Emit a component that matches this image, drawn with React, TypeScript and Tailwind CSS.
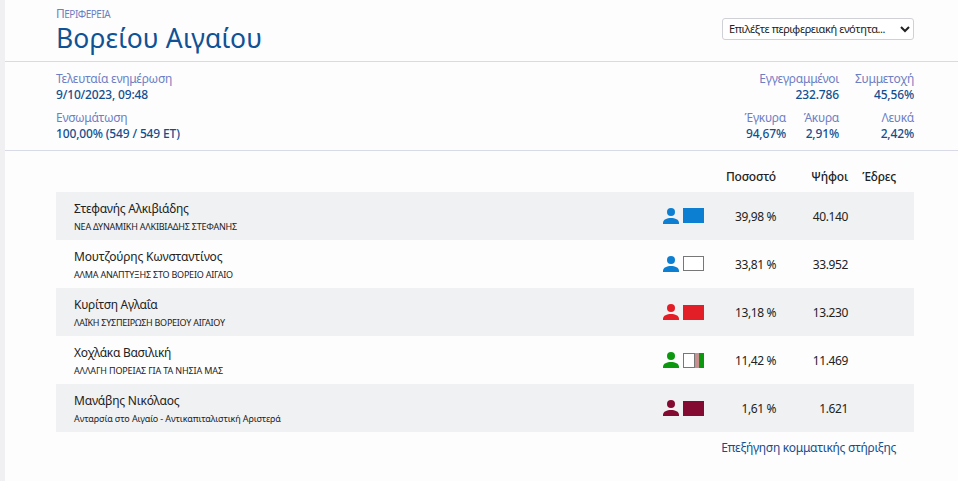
import React from "react";

type Candidate = {
    name: string;
    list: string;
    percent: string;
    votes: string;
    iconClass: string;
    flags: string[];
    flagOffset: string;
    nameClass: string;
    listClass: string;
};

const candidates: Candidate[] = [
    {
        name: "Στεφανής Αλκιβιάδης",
        list: "ΝΕΑ ΔΥΝΑΜΙΚΗ ΑΛΚΙΒΙΑΔΗΣ ΣΤΕΦΑΝΗΣ",
        percent: "39,98 %",
        votes: "40.140",
        iconClass: "text-[#0c7fd2]",
        flags: ["w-[21px] bg-[#0c7fd2]"],
        flagOffset: "",
        nameClass: "tracking-[-0.26px]",
        listClass: "tracking-[-0.22px]",
    },
    {
        name: "Μουτζούρης Κωνσταντίνος",
        list: "ΑΛΜΑ ΑΝΑΠΤΥΞΗΣ ΣΤΟ ΒΟΡΕΙΟ ΑΙΓΑΙΟ",
        percent: "33,81 %",
        votes: "33.952",
        iconClass: "text-[#0c7fd2]",
        flags: ["w-[21px] border border-[#777] bg-white"],
        flagOffset: "",
        nameClass: "tracking-[-0.17px]",
        listClass: "tracking-[-0.22px]",
    },
    {
        name: "Κυρίτση Αγλαΐα",
        list: "ΛΑΪΚΗ ΣΥΣΠΕΙΡΩΣΗ ΒΟΡΕΙΟΥ ΑΙΓΑΙΟΥ",
        percent: "13,18 %",
        votes: "13.230",
        iconClass: "text-[#e31e26]",
        flags: ["w-[21px] bg-[#e31e26]"],
        flagOffset: "mt-px",
        nameClass: "tracking-[-0.3px]",
        listClass: "tracking-[-0.26px]",
    },
    {
        name: "Χοχλάκα Βασιλική",
        list: "ΑΛΛΑΓΗ ΠΟΡΕΙΑΣ ΓΙΑ ΤΑ ΝΗΣΙΑ ΜΑΣ",
        percent: "11,42 %",
        votes: "11.469",
        iconClass: "text-[#0b980f]",
        flags: ["w-3 border border-[#777] bg-white", "w-1 bg-[#c99090]", "w-[5px] bg-[#0b980f]"],
        flagOffset: "mt-px",
        nameClass: "tracking-[-0.3px]",
        listClass: "tracking-[-0.14px]",
    },
    {
        name: "Μανάβης Νικόλαος",
        list: "Ανταρσία στο Αιγαίο - Αντικαπιταλιστική Αριστερά",
        percent: "1,61 %",
        votes: "1.621",
        iconClass: "text-[#830a30]",
        flags: ["w-[21px] bg-[#830a30]"],
        flagOffset: "mt-px",
        nameClass: "tracking-[-0.2px]",
        listClass: "tracking-[-0.12px]",
    },
];

function PersonIcon({ className }: { className: string }) {
    return (
        <svg viewBox="0 0 16 16" fill="currentColor" className={`h-4 w-4 ${className}`}>
            <circle cx="8" cy="4" r="4" />
            <path d="M0 16v-1.2C0 11.6 4 10 8 10s8 1.600 8 4.800V16z" />
        </svg>
    );
}

function Stat({ label, value, className = "" }: { label: string; value: string; className?: string }) {
    return (
        <div className={className}>
            <div className="tracking-[-0.28px] text-[#6d7fc4]">{label}</div>
            <div className="-mt-px mb-px font-medium tracking-[-0.15px] text-[#134f8f]">{value}</div>
        </div>
    );
}

export default function App() {
    return (
        <div className="h-[481px] w-[958px] overflow-hidden border-l-[5px] border-[#f0f0f2] bg-[#fdfdfe] font-['Noto_Sans',sans-serif] text-[#222] whitespace-nowrap">
            {/* Title */}
            <header className="flex h-[62px] justify-between border-b border-[#d8dbe7] pr-[44px] pl-[51px]">
                <div className="pt-[5px] text-[#0f5295]">
                    <div className="text-[12px] leading-[17px] tracking-[-0.5px] text-[#6d7fc4]">
                        Π<span className="text-[10px]">ΕΡΙΦΕΡΕΙΑ</span>
                    </div>
                    <h1 className="text-[26.500px] leading-[30px] tracking-[0.15px]">Βορείου Αιγαίου</h1>
                </div>
                <select className="mt-[18px] h-[22px] w-[192px] rounded-[3px] border border-[#cfd1d6] bg-white pb-px pl-[2px] text-[11px] tracking-[-0.42px] text-[#222]">
                    <option>Επιλέξτε περιφερειακή ενότητα...</option>
                </select>
            </header>

            {/* Totals */}
            <section className="flex h-[89px] justify-between border-b border-[#d8dbe7] pt-[8px] pr-[44px] pl-[51px] text-[12px] leading-[17px]">
                <div className="flex flex-col gap-[5px]">
                    <Stat label="Τελευταία ενημέρωση" value="9/10/2023, 09:48" />
                    <Stat label="Ενσωμάτωση" value="100,00% (549 / 549 ΕΤ)" />
                </div>
                <div className="flex flex-col gap-[5px] text-right">
                    <div className="flex justify-end">
                        <Stat label="Εγγεγραμμένοι" value="232.786" />
                        <Stat label="Συμμετοχή" value="45,56%" className="w-[75px]" />
                    </div>
                    <div className="flex justify-end">
                        <Stat label="Έγκυρα" value="94,67%" />
                        <Stat label="Άκυρα" value="2,91%" className="w-[53px]" />
                        <Stat label="Λευκά" value="2,42%" className="w-[75px]" />
                    </div>
                </div>
            </section>

            {/* Results */}
            <main className="pr-[44px] pl-[51px] text-[12px] leading-[17px]">
                <div className="flex h-[41px] items-center justify-end pt-[9px] pr-[18px] text-right font-medium tracking-[-0.2px]">
                    <div>Ποσοστό</div>
                    <div className="w-[72px]">Ψήφοι</div>
                    <div className="w-[48px]">Έδρες</div>
                </div>
                {candidates.map((c) => (
                    <div key={c.name} className="flex h-12 items-center pl-[18px] odd:bg-[#fdfdfe] even:bg-[#f0f1f3]">
                        <div className="flex-1 pt-[3px]">
                            <div className={`leading-[18px] ${c.nameClass}`}>{c.name}</div>
                            <div className={`text-[9px] leading-[18px] ${c.listClass}`}>{c.list}</div>
                        </div>
                        <div className="flex w-[41px] gap-1">
                            <PersonIcon className={c.iconClass} />
                            <div className={`flex h-[15px] ${c.flagOffset}`}>
                                {c.flags.map((flag) => (
                                    <span key={flag} className={`h-full ${flag}`} />
                                ))}
                            </div>
                        </div>
                        <div className="w-[72px] text-right tracking-[-0.4px]">{c.percent}</div>
                        <div className="mr-[66px] w-[72px] text-right tracking-[-0.4px]">{c.votes}</div>
                    </div>
                ))}
                <div className="pt-[7px] pr-[18px] text-right tracking-[-0.3px]">
                    <a href="#" className="text-[#134f8f]">Επεξήγηση κομματικής στήριξης</a>
                </div>
            </main>
        </div>
    );
}
